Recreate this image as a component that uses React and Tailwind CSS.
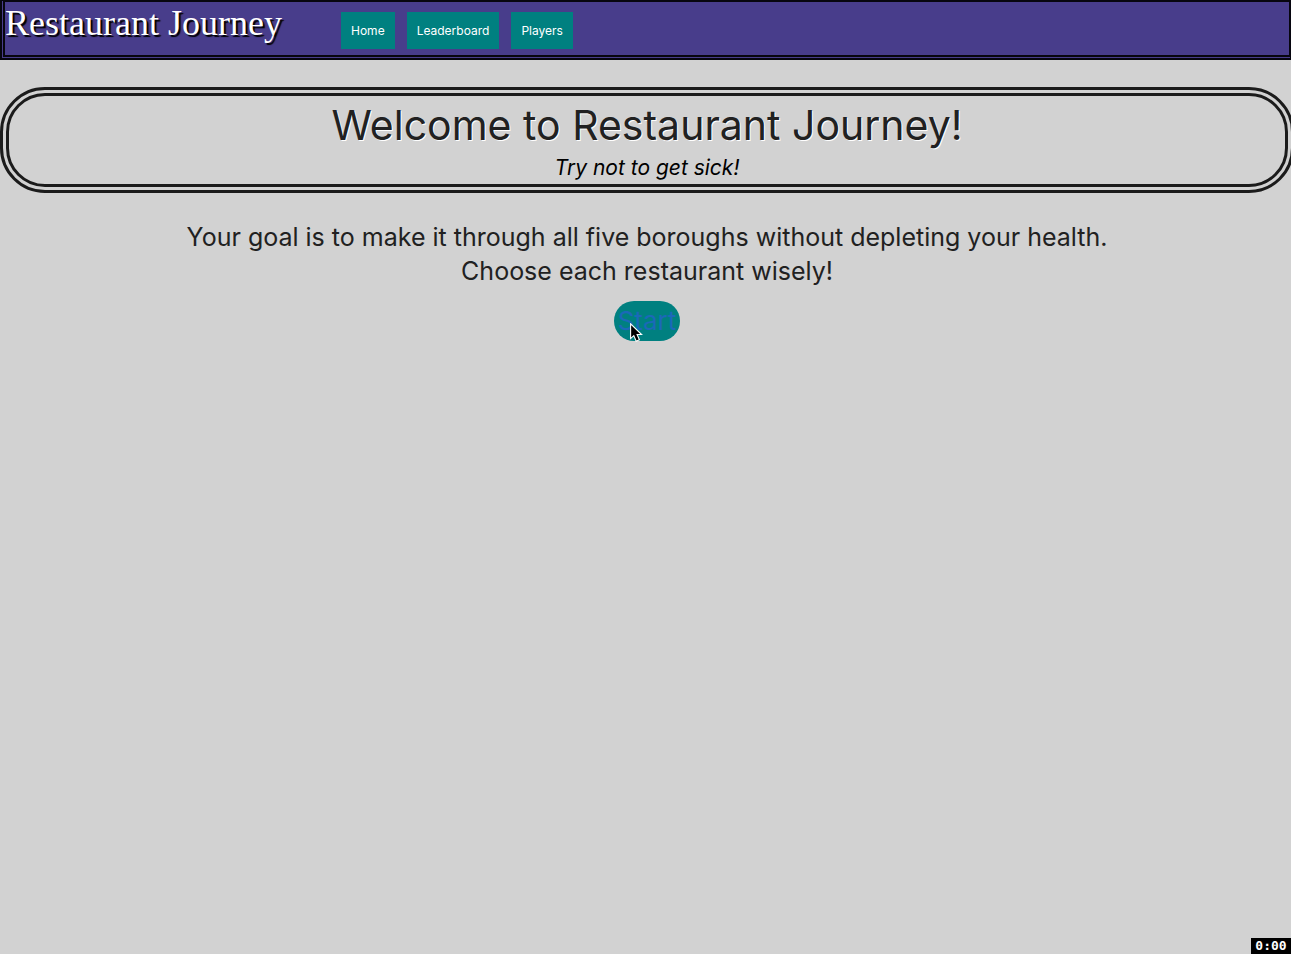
const links = ["Home", "Leaderboard", "Players"];

function Cursor() {
  return (
    <svg className="pointer-events-none absolute left-4 top-[22px] h-5 w-3.5" viewBox="0 0 14 20" aria-hidden="true">
      <path
        d="M0.6 0.8V15.6L3.8 12.6L6.2 18.2L9.4 16.8L7.1 11.5H11.6Z"
        fill="#000"
        stroke="#fff"
        strokeWidth="1.1"
      />
    </svg>
  );
}

function Timer() {
  return (
    <div className="absolute right-0 bottom-0 h-4 w-10 bg-black text-center font-['DejaVu_Sans_Mono',monospace] text-[13px] leading-4 font-bold text-white">
      0:00
    </div>
  );
}

export default function App() {
  return (
    <div className="relative min-h-screen overflow-hidden bg-[#d2d2d2] font-['Inter',sans-serif] text-[#212121]">
      <header className="flex h-15 items-start border-t-2 border-r-2 border-b-5 border-l-5 border-double border-[#07060f] bg-[#483d8b]">
        <div className="w-[336px] shrink-0 font-['Liberation_Serif',serif] text-[36px] leading-[42px] text-white [text-shadow:2px_2px_1px_#000]">
          Restaurant Journey
        </div>
        <nav className="mt-2.5 flex gap-3">
          {links.map((label) => (
            <a
              key={label}
              href="#"
              className="bg-[#008080] px-2.5 text-[12px] leading-[37px] text-white"
            >
              {label}
            </a>
          ))}
        </nav>
      </header>

      <main className="-mr-[3px] pt-[27px] text-center">
        <section className="h-[106px] rounded-[45px] border-9 border-double border-[#1b1b1b] pt-1">
          <h1 className="text-[41px] leading-[50px] [text-shadow:1px_1px_#fff]">
            Welcome to Restaurant Journey!
          </h1>
          <p className="text-[21px] leading-9 text-black italic">Try not to get sick!</p>
        </section>
        <p className="mt-[27px] text-[25px] leading-[34px]">
          Your goal is to make it through all five boroughs without depleting your health.
          <br />
          Choose each restaurant wisely!
        </p>
        <div className="relative mx-auto mt-[13px] w-fit">
          <button
            type="button"
            className="h-10 rounded-full bg-[#008080] px-1 text-[26px] leading-10 text-[#1b69b8]"
          >
            Start
          </button>
          <Cursor />
        </div>
      </main>

      <Timer />
    </div>
  );
}
